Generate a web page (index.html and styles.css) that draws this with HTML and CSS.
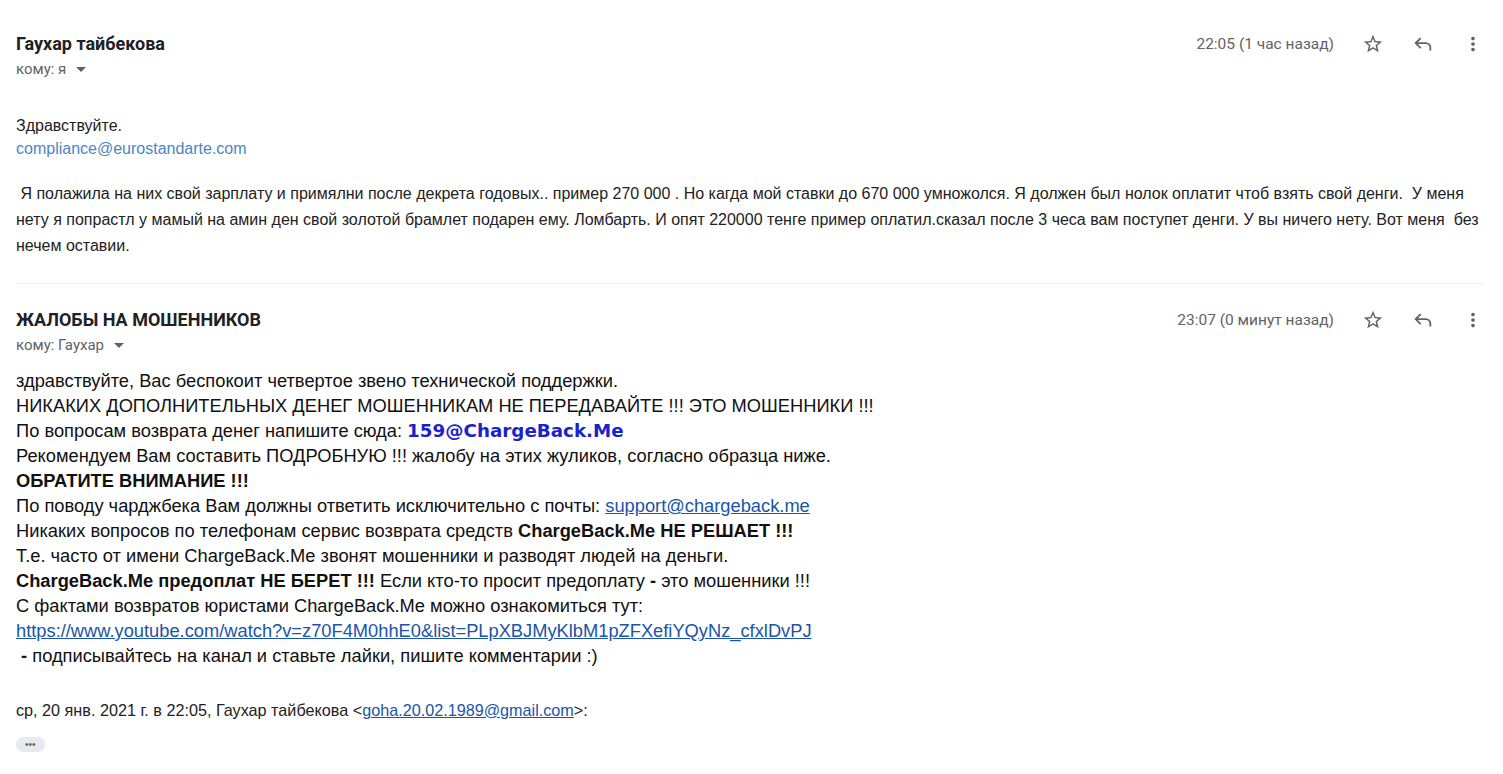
FILE: index.html
```html
<!DOCTYPE html>
<html>
<head>
    <title>Письма</title>
    <link rel="stylesheet" href="styles.css">
</head>
<body>
    <div class="thread">
        <div class="message">
            <div class="message-head">
                <div class="sender">
                    <div class="sender-name">Гаухар тайбекова</div>
                    <div class="recipient">кому: я <span class="caret"></span></div>
                </div>
                <div class="meta">
                    <span class="date">22:05 (1 час назад)</span>
                    <span class="icon-btn">
                        <svg width="22" height="22" viewBox="0 0 24 24"><path fill="#5f6368" d="M22 9.24l-7.19-.62L12 2 9.19 8.63 2 9.24l5.46 4.73L5.82 21 12 17.27 18.18 21l-1.63-7.03L22 9.24zM12 15.4l-3.76 2.27 1-4.28-3.32-2.88 4.38-.38L12 6.1l1.71 4.04 4.38.38-3.32 2.88 1 4.28L12 15.4z"/></svg>
                    </span>
                    <span class="icon-btn">
                        <svg width="22" height="22" viewBox="0 0 24 24"><path fill="none" stroke="#5f6368" stroke-width="2" d="M9.5 5.5L4 11l5.5 5.5M4 11h11a5 5 0 0 1 5 5v3"/></svg>
                    </span>
                    <span class="icon-btn">
                        <svg width="22" height="22" viewBox="0 0 24 24"><path fill="#5f6368" d="M12 8c1.1 0 2-.9 2-2s-.9-2-2-2-2 .9-2 2 .9 2 2 2zm0 2c-1.1 0-2 .9-2 2s.9 2 2 2 2-.9 2-2-.9-2-2-2zm0 6c-1.1 0-2 .9-2 2s.9 2 2 2 2-.9 2-2-.9-2-2-2z"/></svg>
                    </span>
                </div>
            </div>
            <div class="body-plain">
                <p class="greet">Здравствуйте.<br><a href="#" class="light-link">compliance@eurostandarte.com</a></p>
                <p class="story">&nbsp;Я полажила на них свой зарплату и примялни после декрета годовых.. пример 270 000 . Но кагда мой ставки до 670 000 умножолся. Я должен был нолок оплатит чтоб взять свой денги.&nbsp; У меня нету я попрастл у мамый на амин ден свой золотой брамлет подарен ему. Ломбарть. И опят 220000 тенге пример оплатил.сказал после 3 чеса вам поступет денги. У вы ничего нету. Вот меня&nbsp; без нечем оставии.</p>
            </div>
        </div>

        <div class="message last">
            <div class="message-head">
                <div class="sender">
                    <div class="sender-name">ЖАЛОБЫ НА МОШЕННИКОВ</div>
                    <div class="recipient">кому: Гаухар <span class="caret"></span></div>
                </div>
                <div class="meta">
                    <span class="date">23:07 (0 минут назад)</span>
                    <span class="icon-btn">
                        <svg width="22" height="22" viewBox="0 0 24 24"><path fill="#5f6368" d="M22 9.24l-7.19-.62L12 2 9.19 8.63 2 9.24l5.46 4.73L5.82 21 12 17.27 18.18 21l-1.63-7.03L22 9.24zM12 15.4l-3.76 2.27 1-4.28-3.32-2.88 4.38-.38L12 6.1l1.71 4.04 4.38.38-3.32 2.88 1 4.28L12 15.4z"/></svg>
                    </span>
                    <span class="icon-btn">
                        <svg width="22" height="22" viewBox="0 0 24 24"><path fill="none" stroke="#5f6368" stroke-width="2" d="M9.5 5.5L4 11l5.5 5.5M4 11h11a5 5 0 0 1 5 5v3"/></svg>
                    </span>
                    <span class="icon-btn">
                        <svg width="22" height="22" viewBox="0 0 24 24"><path fill="#5f6368" d="M12 8c1.1 0 2-.9 2-2s-.9-2-2-2-2 .9-2 2 .9 2 2 2zm0 2c-1.1 0-2 .9-2 2s.9 2 2 2 2-.9 2-2-.9-2-2-2zm0 6c-1.1 0-2 .9-2 2s.9 2 2 2 2-.9 2-2-.9-2-2-2z"/></svg>
                    </span>
                </div>
            </div>
            <div class="body-rich">
                <div>здравствуйте, Вас беспокоит четвертое звено технической поддержки.</div>
                <div>НИКАКИХ ДОПОЛНИТЕЛЬНЫХ ДЕНЕГ МОШЕННИКАМ НЕ ПЕРЕДАВАЙТЕ !!! ЭТО МОШЕННИКИ !!!</div>
                <div>По вопросам возврата денег напишите сюда: <b class="blue">159@ChargeBack.Me</b></div>
                <div>Рекомендуем Вам составить ПОДРОБНУЮ !!! жалобу на этих жуликов, согласно образца ниже.</div>
                <div><b>ОБРАТИТЕ ВНИМАНИЕ !!!</b></div>
                <div>По поводу чарджбека Вам должны ответить исключительно с почты: <a href="#">support@chargeback.me</a></div>
                <div>Никаких вопросов по телефонам сервис возврата средств <b>ChargeBack.Me НЕ РЕШАЕТ !!!</b></div>
                <div>Т.е. часто от имени ChargeBack.Me звонят мошенники и разводят людей на деньги.</div>
                <div><b>ChargeBack.Me предоплат НЕ БЕРЕТ !!!</b> Если кто-то просит предоплату <b>-</b> это мошенники !!!</div>
                <div>С фактами возвратов юристами ChargeBack.Me можно ознакомиться тут:</div>
                <div><a href="#">https://www.youtube.com/watch?v=z70F4M0hhE0&amp;list=PLpXBJMyKlbM1pZFXefiYQyNz_cfxlDvPJ</a></div>
                <div>&nbsp;<b>-</b> подписывайтесь на канал и ставьте лайки, пишите комментарии :)</div>
            </div>
            <div class="quote-line">ср, 20 янв. 2021 г. в 22:05, Гаухар тайбекова &lt;<a href="#">goha.20.02.1989@gmail.com</a>&gt;:</div>
            <div class="more-dots">&bull;&bull;&bull;</div>
        </div>
    </div>
</body>
</html>
```

FILE: styles.css
```css
body {
    margin: 0;
    padding: 0;
    background-color: #fff;
    font-family: "Liberation Sans", Arial, sans-serif;
    color: #222;
}
.thread {
    padding: 0 19px 0 16px;
}
.message {
    border-bottom: 1px solid #efefef;
    padding: 32px 0 24px;
}
.message.last {
    border-bottom: none;
    padding-top: 24px;
}
.message-head {
    display: flex;
    justify-content: space-between;
    align-items: flex-start;
}
.sender-name {
    font-family: Roboto, "Liberation Sans", sans-serif;
    font-weight: bold;
    font-size: 18px;
    line-height: 24px;
    color: #202124;
}
.recipient {
    font-family: Roboto, "Liberation Sans", sans-serif;
    font-size: 15px;
    line-height: 26px;
    color: #5f6368;
}
.caret {
    display: inline-block;
    width: 0;
    height: 0;
    border-left: 5px solid transparent;
    border-right: 5px solid transparent;
    border-top: 5px solid #5f6368;
    margin-left: 6px;
    vertical-align: 2px;
}
.meta {
    display: flex;
    align-items: center;
    height: 24px;
}
.date {
    font-family: Roboto, "Liberation Sans", sans-serif;
    font-size: 15.5px;
    color: #5f6368;
    margin-right: 28px;
}
.icon-btn {
    width: 22px;
    height: 22px;
    margin-left: 28px;
    display: flex;
}
.date + .icon-btn {
    margin-left: 0;
}
.body-plain {
    font-size: 16px;
    color: #222;
    padding-top: 32px;
}
.body-plain p {
    margin: 0;
}
.greet {
    line-height: 23px;
}
.story {
    line-height: 26px;
    padding-top: 21px;
}
.light-link {
    color: #4a86c7;
    text-decoration: none;
}
.body-rich {
    font-size: 18.3px;
    line-height: 25px;
    padding-top: 10px;
    color: #111;
}
.body-rich a,
.quote-line a {
    color: #1a55a8;
}
.blue {
    color: #1a22cc;
    font-family: "DejaVu Sans", sans-serif;
    font-size: 18.3px;
}
.quote-line {
    font-size: 16.2px;
    color: #222;
    margin-top: 33px;
}
.more-dots {
    display: inline-block;
    margin-top: 17px;
    background-color: #e8eaed;
    color: #5f6368;
    font-size: 10px;
    line-height: 13px;
    padding: 1px 9px;
    border-radius: 7px;
}
```
